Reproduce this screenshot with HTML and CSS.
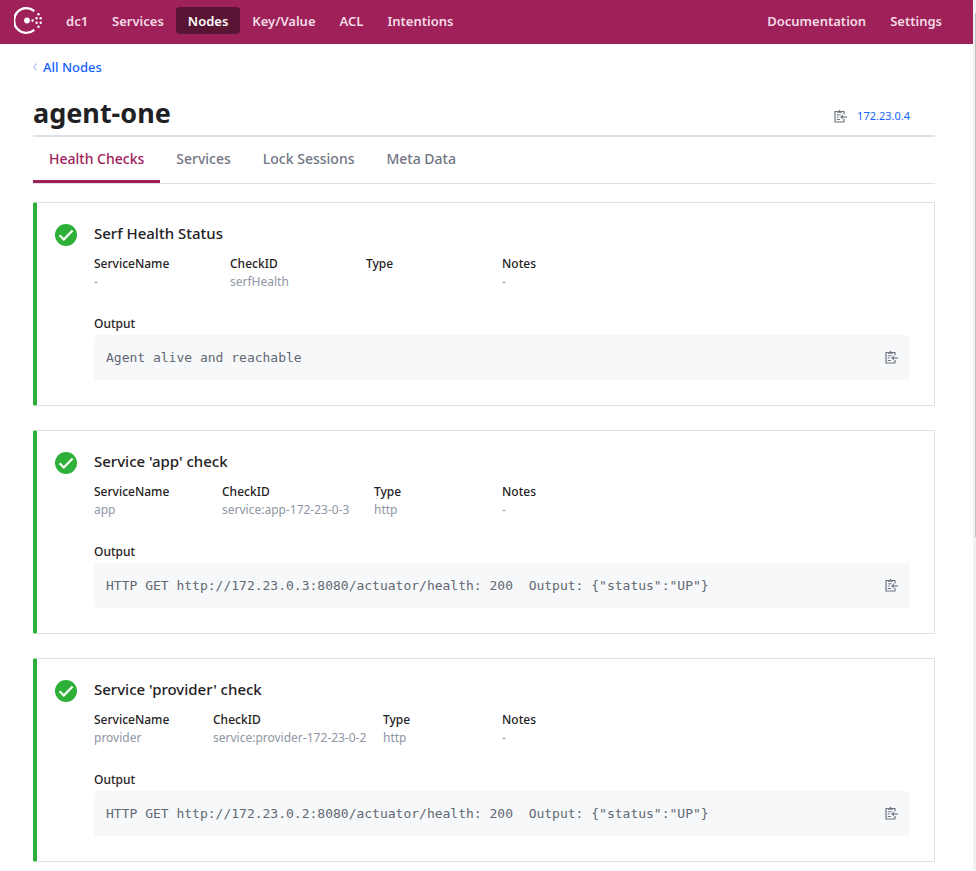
FILE: index.html
```html
<!DOCTYPE html>
<html lang="en">
<head>
<meta charset="utf-8">
<meta name="viewport" content="width=device-width, initial-scale=1">
<title>agent-one - Consul</title>
<link rel="stylesheet" href="styles.css">
</head>
<body>
<svg class="symbols" aria-hidden="true">
  <symbol id="copy" viewBox="0 0 13 14">
    <path d="M3 2.500H1v10.500h9V10M8 2.500h2V5.500" fill="none" stroke="currentColor" stroke-width="1.200"/>
    <path d="M3 3.700V2h1.500l1-1.500 1 1.500H8v1.700z" fill="currentColor"/>
    <path d="M2.800 5.800h4M2.800 8h2M2.800 10.500h3.200" fill="none" stroke="currentColor"/>
    <path d="M13 8H8" fill="none" stroke="currentColor" stroke-width="1.200"/>
    <path d="M8.800 5.600v4.800L6.200 8z" fill="currentColor"/>
  </symbol>
  <symbol id="check" viewBox="0 0 22 22">
    <circle cx="11" cy="11" r="11" fill="#2eb039"/>
    <path d="M4.600 11.300l4.200 4.200 8.800-9" fill="none" stroke="#fff" stroke-width="2.200"/>
  </symbol>
</svg>
<div class="page">
  <header class="topbar">
    <a class="logo" href="#" aria-label="Consul">
      <svg width="28" height="28" viewBox="0 0 28 28" fill="#fff">
        <path d="M20.300 4.100A12.300 12.300 0 1 0 20.300 22.900" fill="none" stroke="#fff" stroke-width="2.300"/>
        <circle cx="13" cy="13.500" r="2.900"/>
        <circle cx="18.600" cy="13.500" r="1.200"/>
        <circle cx="22.600" cy="11.300" r="1.200"/><circle cx="22.600" cy="15.700" r="1.200"/>
        <circle cx="24.500" cy="7.200" r="1.200"/><circle cx="24.500" cy="19.800" r="1.200"/>
        <circle cx="26.700" cy="11.300" r="1.200"/><circle cx="26.700" cy="15.700" r="1.200"/>
      </svg>
    </a>
    <nav class="nav">
      <a href="#">dc1</a>
      <a href="#">Services</a>
      <a class="active" href="#">Nodes</a>
      <a href="#">Key/Value</a>
      <a href="#">ACL</a>
      <a href="#">Intentions</a>
    </nav>
    <nav class="nav nav-end">
      <a href="#">Documentation</a>
      <a href="#">Settings</a>
    </nav>
  </header>
  <main class="content">
    <a class="back" href="#"><svg width="4" height="8" viewBox="0 0 4 8"><path d="M3.500 .5L.7 4l2.800 3.500" fill="none" stroke="#8fabff"/></svg>All Nodes</a>
    <div class="heading">
      <h1>agent-one</h1>
      <div class="address">
        <button type="button" aria-label="Copy address"><svg width="13" height="14"><use href="#copy"/></svg></button>
        <a href="#">172.23.0.4</a>
      </div>
    </div>
    <nav class="tabs">
      <a class="active" href="#">Health Checks</a>
      <a href="#">Services</a>
      <a href="#">Lock Sessions</a>
      <a href="#">Meta Data</a>
    </nav>
    <div class="checks">
      <article class="card">
        <svg class="status" width="22" height="22"><use href="#check"/></svg>
        <div class="detail">
          <h2>Serf Health Status</h2>
          <dl class="facts">
            <div><dt>ServiceName</dt><dd>-</dd></div>
            <div><dt>CheckID</dt><dd>serfHealth</dd></div>
            <div><dt>Type</dt><dd></dd></div>
            <div><dt>Notes</dt><dd>-</dd></div>
          </dl>
          <h3>Output</h3>
          <div class="output">
            <pre>Agent alive and reachable</pre>
            <button type="button" aria-label="Copy output"><svg width="13" height="14"><use href="#copy"/></svg></button>
          </div>
        </div>
      </article>
      <article class="card">
        <svg class="status" width="22" height="22"><use href="#check"/></svg>
        <div class="detail">
          <h2>Service 'app' check</h2>
          <dl class="facts facts-medium">
            <div><dt>ServiceName</dt><dd>app</dd></div>
            <div><dt>CheckID</dt><dd>service:app-172-23-0-3</dd></div>
            <div><dt>Type</dt><dd>http</dd></div>
            <div><dt>Notes</dt><dd>-</dd></div>
          </dl>
          <h3>Output</h3>
          <div class="output">
            <pre>HTTP GET http://172.23.0.3:8080/actuator/health: 200  Output: {"status":"UP"}</pre>
            <button type="button" aria-label="Copy output"><svg width="13" height="14"><use href="#copy"/></svg></button>
          </div>
        </div>
      </article>
      <article class="card">
        <svg class="status" width="22" height="22"><use href="#check"/></svg>
        <div class="detail">
          <h2>Service 'provider' check</h2>
          <dl class="facts facts-wide">
            <div><dt>ServiceName</dt><dd>provider</dd></div>
            <div><dt>CheckID</dt><dd>service:provider-172-23-0-2</dd></div>
            <div><dt>Type</dt><dd>http</dd></div>
            <div><dt>Notes</dt><dd>-</dd></div>
          </dl>
          <h3>Output</h3>
          <div class="output">
            <pre>HTTP GET http://172.23.0.2:8080/actuator/health: 200  Output: {"status":"UP"}</pre>
            <button type="button" aria-label="Copy output"><svg width="13" height="14"><use href="#copy"/></svg></button>
          </div>
        </div>
      </article>
    </div>
  </main>
</div>
<div class="scroll"><div class="thumb"></div></div>
</body>
</html>
```
FILE: styles.css
```css
* { box-sizing: border-box; }
body {
  margin: 0;
  display: flex;
  min-height: 100vh;
  background: #fff;
  color: #1f2124;
  font-family: "Noto Sans", "Open Sans", sans-serif;
  font-size: 12px;
}
h1, h2, h3, dl, dd, pre { margin: 0; }
a { color: #1563ff; text-decoration: none; }
button { padding: 0; border: 0; background: none; color: #6f7682; cursor: pointer; }
svg { display: block; }
.symbols { position: absolute; width: 0; height: 0; }
.page { flex: 1; min-width: 0; }

.topbar {
  display: flex;
  align-items: center;
  height: 44px;
  padding: 0 19px 3px 14px;
  background: #9e2159;
}
.logo { margin-right: 12px; }
.nav { display: flex; }
.nav-end { margin-left: auto; }
.nav a {
  padding: 2px 12px 0;
  border-radius: 4px;
  color: #f5dbe6;
  font-size: 13px;
  font-weight: 600;
  line-height: 25px;
}
.nav .active { background: #5a1434; color: #fff; }

.content { padding: 14px 38px 8px 33px; }
.back {
  display: flex;
  align-items: center;
  gap: 6px;
  font-size: 13px;
  font-weight: 500;
  line-height: 18px;
}
.heading {
  display: flex;
  align-items: center;
  justify-content: space-between;
  margin-top: 16px;
  padding-right: 25px;
  padding-bottom: 2px;
  border-bottom: 2px solid #dce0e6;
}
h1 { font-size: 27px; font-weight: 700; line-height: 41px; }
.address { display: flex; align-items: center; gap: 10px; margin-top: 6px; font-size: 11px; }

.tabs { display: flex; border-bottom: 1px solid #dce0e6; }
.tabs a {
  padding: 1px 16px 0;
  border-bottom: 3px solid transparent;
  color: #6f7682;
  font-size: 14px;
  font-weight: 500;
  line-height: 42px;
}
.tabs .active { border-color: #9e2159; color: #9e2159; }

.checks { display: grid; gap: 24px; margin-top: 18px; }
.card {
  display: flex;
  gap: 17px;
  padding: 18px 24px 25px 18px;
  border: 1px solid #dce0e6;
  border-left: 4px solid #2eb039;
  border-radius: 2px 1px 1px 2px;
}
.status { flex: none; margin-top: 3px; }
.detail { flex: 1; min-width: 0; }
h2 { font-size: 15px; font-weight: 500; line-height: 24px; }
.facts {
  display: grid;
  grid-template-columns: 136fr 136fr 136fr 408fr;
  margin: 10px 0 24px;
  line-height: 18px;
}
.facts-medium { grid-template-columns: 128fr 152fr 128fr 408fr; }
.facts-wide { grid-template-columns: 119fr 170fr 119fr 408fr; }
dt { font-weight: 500; }
dd { min-height: 18px; color: #8e96a3; }
h3 { margin-bottom: 2px; font-size: 12px; font-weight: 500; line-height: 18px; }
.output {
  display: flex;
  align-items: center;
  justify-content: space-between;
  height: 45px;
  padding: 0 12px 2px;
  border-radius: 2px;
  background: #f7f8fa;
}
pre { padding-top: 2px; color: #626873; font: 13px "DejaVu Sans Mono", monospace; }

.scroll { flex: none; width: 3px; padding: 13px 0 0 2px; background: #f1f1f1; }
.thumb { height: 524px; background: #c1c1c1; }
```
